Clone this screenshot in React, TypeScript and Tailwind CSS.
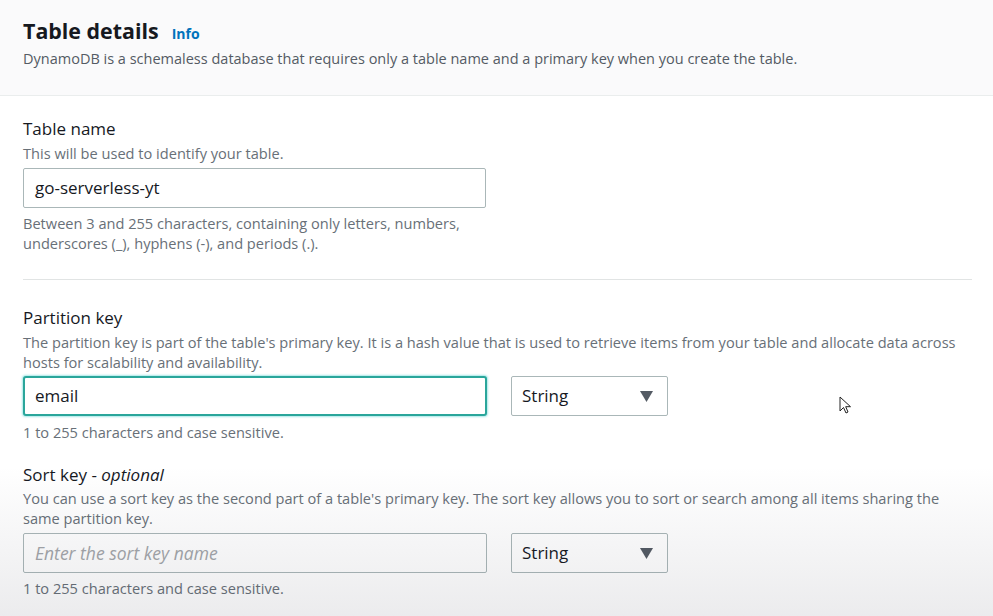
import React from "react";

const font = { fontFamily: '"Open Sans", "Noto Sans", sans-serif' };

function Caret() {
  return (
    <svg width="13" height="11" viewBox="0 0 13 11" className="shrink-0">
      <polygon points="0,0 13,0 6.5,11" fill="#545b64" />
    </svg>
  );
}

function Select() {
  return (
    <div className="w-[157px] h-[40px] border border-[#aab7b8] rounded-[2px] bg-white flex items-center justify-between pl-[10px] pr-[14px]">
      <span className="text-[17px] text-[#16191f]">String</span>
      <Caret />
    </div>
  );
}

const hint = "text-[14.6px] text-[#687078] leading-[20px]";

export default function App() {
  return (
    <div className="relative w-[993px] h-[616px] overflow-hidden bg-white" style={font}>
      <div className="bg-[#fafafb] h-[96px] border-b border-[#eaeded] pl-[23px] pt-[15px]">
        <div className="flex items-baseline gap-[13px]">
          <h1 className="text-[21.4px] font-bold text-[#16191f] leading-[32px]">Table details</h1>
          <span className="text-[14px] font-bold text-[#0073bb]">Info</span>
        </div>
        <p className="text-[14.5px] text-[#545b64] leading-[20px] mt-[2px]">
          DynamoDB is a schemaless database that requires only a table name and a primary key when you create the table.
        </p>
      </div>

      <div className="px-[23px] pr-[21px]">
        <div className="pt-[22px] pb-[26px] border-b border-[#e1e4e4]">
          <div className="text-[17px] text-[#16191f] leading-[22px]">Table name</div>
          <div className={`${hint} mt-[3px]`}>This will be used to identify your table.</div>
          <div className="mt-[5px] w-[463px] h-[40px] border border-[#aab7b8] rounded-[2px] bg-white flex items-center px-[11px] text-[17px] text-[#16191f]">
            go-serverless-yt
          </div>
          <div className={`${hint} mt-[5px]`}>
            Between 3 and 255 characters, containing only letters, numbers,
            <br />
            underscores (_), hyphens (-), and periods (.).
          </div>
        </div>

        <div className="pt-[27px]">
          <div className="text-[17px] text-[#16191f] leading-[22px]">Partition key</div>
          <div className={`${hint} mt-[3px]`}>
            The partition key is part of the table's primary key. It is a hash value that is used to retrieve items from your table and allocate data across hosts for scalability and availability.
          </div>
          <div className="mt-[4px] flex gap-[24px] items-center">
            <div className="w-[464px] h-[40px] border-2 border-[#2aa69b] rounded-[3px] shadow-[0_0_2px_1px_rgba(0,190,190,0.35)] bg-white flex items-center px-[10px] text-[17px] text-[#16191f]">
              email
            </div>
            <Select />
          </div>
          <div className={`${hint} mt-[6px]`}>1 to 255 characters and case sensitive.</div>
        </div>

        <div className="pt-[22px]">
          <div className="text-[17px] text-[#16191f] leading-[22px]">
            Sort key - <i>optional</i>
          </div>
          <div className={`${hint} mt-[2px]`}>
            You can use a sort key as the second part of a table's primary key. The sort key allows you to sort or search among all items sharing the same partition key.
          </div>
          <div className="mt-[5px] flex gap-[24px] items-center">
            <div className="w-[464px] h-[40px] border border-[#aab7b8] rounded-[2px] bg-white flex items-center px-[11px] text-[17.5px] italic text-[#a3a6aa]">
              Enter the sort key name
            </div>
            <Select />
          </div>
          <div className={`${hint} mt-[5px]`}>1 to 255 characters and case sensitive.</div>
        </div>
      </div>

      <div className="pointer-events-none absolute left-0 right-0 bottom-0 h-[150px] bg-gradient-to-b from-transparent to-[rgba(40,40,60,0.09)]" />

      <svg className="absolute left-[839px] top-[396px]" width="13" height="19" viewBox="0 0 13 19">
        <path d="M1 1 L1 15 L4.5 11.5 L7 17 L9 16 L6.7 10.7 L11.5 10.7 Z" fill="white" stroke="#222" strokeWidth="1" strokeLinejoin="round" />
      </svg>
    </div>
  );
}
